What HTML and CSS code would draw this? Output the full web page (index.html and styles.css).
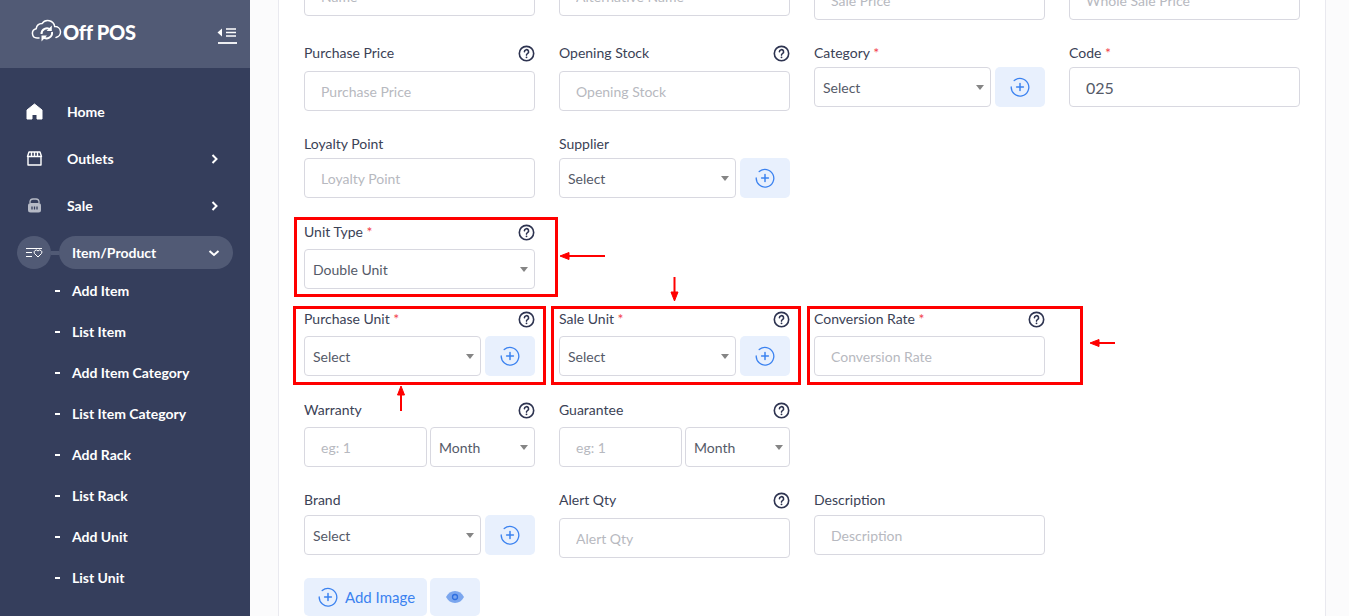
FILE: index.html
```html
<!DOCTYPE html>
<html lang="en">
<head>
  <meta charset="UTF-8">
  <meta name="viewport" content="width=device-width, initial-scale=1.0">
  <title>Off POS - Add Item</title>
  <link rel="stylesheet" href="styles.css">
</head>
<body>
  <svg width="0" height="0" class="defs">
    <symbol id="plus" viewBox="0 0 20 20">
      <path d="M4.2 3.6A8.8 8.8 0 1 1 1.2 10" fill="none" stroke="currentColor" stroke-width="1.3" stroke-linecap="round"/>
      <path d="M10 6.6v6.8M6.6 10h6.8" fill="none" stroke="currentColor" stroke-width="1.5" stroke-linecap="round"/>
    </symbol>
    <symbol id="help" viewBox="0 0 18 18">
      <circle cx="9" cy="9" r="7.6" fill="none" stroke="currentColor" stroke-width="1.7"/>
      <path d="M6.8 7.2A2.2 2.2 0 1 1 10 9.1c-.7.4-1 .8-1 1.6" fill="none" stroke="currentColor" stroke-width="1.7" stroke-linecap="round"/>
      <circle cx="9" cy="13.1" r="1" fill="currentColor"/>
    </symbol>
  </svg>

  <div class="layout">
    <aside class="sidebar">
      <div class="brand">
        <div class="logo">
          <svg width="31" height="26" viewBox="0 0 31 26">
            <path d="M8 19H6a4.7 4.7 0 0 1-.8-9.3A6 6 0 0 1 11 4.600a7 7 0 0 1 12.700 2.900 5.500 5.500 0 0 1 1.300 10.900" fill="none" stroke="#fff" stroke-width="1.500" stroke-linecap="round"/>
            <path d="M10.500 15a5.500 5.500 0 0 1 9-4.500M21 13a5.500 5.500 0 0 1-9 5" fill="none" stroke="#fff" stroke-width="2"/>
            <path d="M20.800 6.600v5.400h-5.200zM10.500 22.500v-6h5.500z" fill="#fff"/>
          </svg>
          <span class="logo-text">Off POS</span>
        </div>
        <svg class="toggle" width="20" height="18" viewBox="0 0 20 18">
          <path d="M5 1.500v8L.5 5.500z" fill="#fff"/>
          <path d="M9 2h10M9 5.500h10M9 9h10" stroke="#fff" stroke-width="1.300"/>
          <path d="M1 16h19" stroke="#fff" stroke-width="1.800"/>
        </svg>
      </div>

      <nav class="nav">
        <a class="nav-item">
          <svg class="nav-icon" width="17" height="17" viewBox="0 0 17 17"><path d="M8.500 1 16 7v9h-5v-4.500H6V16H1V7z" fill="#fff" stroke="#fff" stroke-linejoin="round"/></svg>
          <span>Home</span>
        </a>
        <a class="nav-item">
          <svg class="nav-icon" width="17" height="17" viewBox="0 0 17 17"><path d="M2 7v8h13V7M1.500 6.500 3 2h11l1.500 4.500zM5.500 2.500v4M8.500 2.500v4M11.500 2.500v4" fill="none" stroke="#fff" stroke-width="1.400" stroke-linejoin="round"/></svg>
          <span>Outlets</span>
          <svg class="chev" width="10" height="12" viewBox="0 0 10 12"><path d="m2.500 2 4 4-4 4" fill="none" stroke="#fff" stroke-width="2"/></svg>
        </a>
        <a class="nav-item">
          <svg class="nav-icon" width="17" height="17" viewBox="0 0 17 17"><path d="M4 6V4.500a3 3 0 0 1 3-2.500h3a3 3 0 0 1 3 2.500V6" fill="none" stroke="#b6bac6" stroke-width="1.300"/><rect x="2" y="6" width="13" height="9.500" rx="2.500" fill="#b6bac6"/><path d="M6 9.500v3M8.500 9.500v3M11 9.500v3" stroke="#353e5c" stroke-width="1.300"/></svg>
          <span>Sale</span>
          <svg class="chev" width="10" height="12" viewBox="0 0 10 12"><path d="m2.500 2 4 4-4 4" fill="none" stroke="#fff" stroke-width="2"/></svg>
        </a>
        <div class="nav-active">
          <span class="active-icon">
            <svg width="17" height="11" viewBox="0 0 17 11"><path d="M0 1.500h16M0 5.500h6M0 9.500h6" stroke="#fff" stroke-width="1"/><path d="M12 10 8.500 6.500a2 2 0 0 1 3.500-2.500 2 2 0 0 1 3.500 2.500z" fill="none" stroke="#fff"/></svg>
          </span>
          <span class="active-link"></span>
          <a class="active-pill">
            <span>Item/Product</span>
            <svg width="12" height="10" viewBox="0 0 12 10"><path d="m1.500 3 4.500 4 4.500-4" fill="none" stroke="#fff" stroke-width="2"/></svg>
          </a>
        </div>
        <ul class="sub-nav">
          <li>Add Item</li>
          <li>List Item</li>
          <li>Add Item Category</li>
          <li>List Item Category</li>
          <li>Add Rack</li>
          <li>List Rack</li>
          <li>Add Unit</li>
          <li>List Unit</li>
        </ul>
      </nav>
    </aside>

    <main class="main">
      <form class="card">
        <div class="row row-first">
          <div class="field short"><input type="text" placeholder="Name"></div>
          <div class="field short"><input type="text" placeholder="Alternative Name"></div>
          <div class="field"><input type="text" placeholder="Sale Price"></div>
          <div class="field"><input type="text" placeholder="Whole Sale Price"></div>
        </div>

        <div class="row">
          <div class="field">
            <div class="label help-label"><span>Purchase Price</span><svg class="help"><use href="#help"/></svg></div>
            <input type="text" placeholder="Purchase Price">
          </div>
          <div class="field">
            <div class="label help-label"><span>Opening Stock</span><svg class="help"><use href="#help"/></svg></div>
            <input type="text" placeholder="Opening Stock">
          </div>
          <div class="field">
            <div class="label"><span>Category <em>*</em></span></div>
            <div class="combo">
              <div class="select"><select><option>Select</option></select></div>
              <button type="button" class="add-btn"><svg><use href="#plus"/></svg></button>
            </div>
          </div>
          <div class="field">
            <div class="label"><span>Code <em>*</em></span></div>
            <input type="text" class="code" value="025">
          </div>
        </div>

        <div class="row row-tall-gap">
          <div class="field">
            <div class="label"><span>Loyalty Point</span></div>
            <input type="text" placeholder="Loyalty Point">
          </div>
          <div class="field">
            <div class="label"><span>Supplier</span></div>
            <div class="combo">
              <div class="select"><select><option>Select</option></select></div>
              <button type="button" class="add-btn"><svg><use href="#plus"/></svg></button>
            </div>
          </div>
        </div>

        <div class="row row-tight">
          <div class="field">
            <div class="label help-label tall"><span>Unit Type <em>*</em></span><svg class="help"><use href="#help"/></svg></div>
            <div class="select"><select><option>Double Unit</option></select></div>
          </div>
        </div>

        <div class="row row-tall-gap">
          <div class="field">
            <div class="label help-label tall"><span>Purchase Unit <em>*</em></span><svg class="help"><use href="#help"/></svg></div>
            <div class="combo">
              <div class="select"><select><option>Select</option></select></div>
              <button type="button" class="add-btn"><svg><use href="#plus"/></svg></button>
            </div>
          </div>
          <div class="field">
            <div class="label help-label tall"><span>Sale Unit <em>*</em></span><svg class="help"><use href="#help"/></svg></div>
            <div class="combo">
              <div class="select"><select><option>Select</option></select></div>
              <button type="button" class="add-btn"><svg><use href="#plus"/></svg></button>
            </div>
          </div>
          <div class="field">
            <div class="label help-label tall rate-label"><span>Conversion Rate <em>*</em></span><svg class="help"><use href="#help"/></svg></div>
            <input type="text" placeholder="Conversion Rate">
          </div>
        </div>

        <div class="row">
          <div class="field">
            <div class="label help-label tall"><span>Warranty</span><svg class="help"><use href="#help"/></svg></div>
            <div class="combo duration">
              <input type="text" placeholder="eg: 1">
              <div class="select"><select><option>Month</option></select></div>
            </div>
          </div>
          <div class="field">
            <div class="label help-label tall"><span>Guarantee</span><svg class="help"><use href="#help"/></svg></div>
            <div class="combo duration">
              <input type="text" placeholder="eg: 1">
              <div class="select"><select><option>Month</option></select></div>
            </div>
          </div>
        </div>

        <div class="row row-last">
          <div class="field">
            <div class="label low"><span>Brand</span></div>
            <div class="combo">
              <div class="select"><select><option>Select</option></select></div>
              <button type="button" class="add-btn"><svg><use href="#plus"/></svg></button>
            </div>
          </div>
          <div class="field">
            <div class="label help-label"><span>Alert Qty</span><svg class="help"><use href="#help"/></svg></div>
            <input type="text" placeholder="Alert Qty">
          </div>
          <div class="field">
            <div class="label low"><span>Description</span></div>
            <input type="text" placeholder="Description">
          </div>
        </div>

        <div class="image-actions">
          <button type="button" class="image-btn"><svg><use href="#plus"/></svg>Add Image</button>
          <button type="button" class="eye-btn">
            <svg width="18" height="12" viewBox="0 0 18 12"><path d="M0 6c2-3.800 5-6 9-6s7 2.200 9 6c-2 3.800-5 6-9 6s-7-2.200-9-6z" fill="#7ba6ee"/><circle cx="9" cy="6" r="2.500" fill="none" stroke="#2f6fe0" stroke-width="1.300"/></svg>
          </button>
        </div>
      </form>
    </main>
  </div>

  <!-- red markup drawn on top of the screenshot -->
  <div class="mark mark-type"></div>
  <div class="mark mark-purchase"></div>
  <div class="mark mark-sale"></div>
  <div class="mark mark-rate"></div>
  <svg class="arrows" width="1349" height="616" viewBox="0 0 1349 616">
    <g fill="#f00" stroke="#f00">
      <path d="M566 256h39" fill="none" stroke-width="2"/><path d="M560 256l9-3.500v7z"/>
      <path d="M1096 343h19" fill="none" stroke-width="2"/><path d="M1090 343l9-3.500v7z"/>
      <path d="M674.500 277v18" fill="none" stroke-width="2"/><path d="M674.500 301l-3.500-9h7z"/>
      <path d="M401 392v19" fill="none" stroke-width="2"/><path d="M401 386l-3.500 9h7z"/>
    </g>
  </svg>
</body>
</html>
```

FILE: styles.css
```css
* {
  box-sizing: border-box;
}
html, body {
  margin: 0;
  height: 100%;
  overflow: hidden;
}
body {
  font-family: "Lato", "Liberation Sans", sans-serif;
  color: #3b4256;
  background: #fbfbfc;
}
.defs {
  position: absolute;
}
.layout {
  display: flex;
  height: 616px;
}

/* sidebar */
.sidebar {
  width: 250px;
  flex: none;
  background: #353e5c;
  color: #fff;
}
.brand {
  height: 68px;
  background: #515a75;
  display: flex;
  align-items: center;
  justify-content: space-between;
  padding: 0 13px 0 31px;
}
.logo {
  display: flex;
  align-items: center;
  margin-bottom: 5px;
}
.logo-text {
  font-size: 20px;
  font-weight: 900;
  letter-spacing: -0.3px;
  margin-left: 1px;
}
.toggle {
  margin-top: 3px;
}
.nav {
  padding-top: 20px;
  font-size: 14px;
  font-weight: 700;
}
.nav-item {
  height: 47px;
  display: flex;
  align-items: center;
  padding-left: 26px;
}
.nav-icon {
  margin-right: 24px;
}
.chev {
  margin-left: auto;
  margin-right: 30px;
}
.nav-active {
  height: 47px;
  display: flex;
  align-items: center;
  padding-left: 17px;
}
.active-icon {
  width: 34px;
  height: 33px;
  border-radius: 50%;
  background: #515a75;
  display: flex;
  align-items: center;
  justify-content: center;
}
.active-link {
  width: 8px;
  height: 4px;
  background: #515a75;
}
.active-pill {
  width: 174px;
  height: 33px;
  border-radius: 17px;
  background: #515a75;
  display: flex;
  align-items: center;
  justify-content: space-between;
  padding: 0 13px;
}
.sub-nav {
  list-style: none;
  margin: -6px 0 0;
  padding: 0;
}
.sub-nav li {
  height: 41px;
  line-height: 41px;
  padding-left: 72px;
  position: relative;
}
.sub-nav li::before {
  content: "";
  position: absolute;
  left: 55px;
  top: 20px;
  width: 5px;
  height: 2px;
  background: #fff;
}

/* form card */
.main {
  flex: 1;
  padding: 0 23px 0 28px;
  overflow: hidden;
}
.card {
  background: #fff;
  border: 1px solid #e9e9ef;
  border-width: 0 1px;
  padding: 0 25px;
  margin-top: -20px;
}
.row {
  display: grid;
  grid-template-columns: repeat(4, 231px);
  column-gap: 24px;
  align-items: start;
  margin-bottom: 23px;
}
.row-first .short {
  margin-top: -4px;
}
.row-tall-gap {
  margin-bottom: 24px;
}
.row-tight {
  margin-bottom: 20px;
}
.row-last {
  margin-bottom: 20px;
}
.label {
  height: 20px;
  line-height: 20px;
  font-size: 14px;
  margin-bottom: 4px;
  color: #3b4256;
}
.label em {
  font-style: normal;
  color: #f2434c;
}
.label.low {
  margin-bottom: 5px;
}
.help-label {
  display: flex;
  align-items: center;
  justify-content: space-between;
  margin-bottom: 8px;
}
.help-label.tall {
  margin-bottom: 7px;
}
.help {
  width: 17px;
  height: 17px;
  color: #2d3350;
}
.rate-label .help {
  margin-right: 0;
}
input, select {
  font: inherit;
  font-size: 14px;
  width: 100%;
  height: 40px;
  background: #fff;
  border: 1px solid #d8d8e0;
  border-radius: 4px;
  color: #555a68;
  outline: none;
}
input {
  padding: 0 16px;
}
input::placeholder {
  color: #b7b9c0;
  opacity: 1;
}
input.code {
  font-size: 16px;
}
select {
  appearance: none;
  padding: 0 20px 0 8px;
}
.select {
  position: relative;
  flex: 1;
  min-width: 0;
}
.select::after {
  content: "";
  position: absolute;
  right: 7px;
  top: 18px;
  border: 4px solid transparent;
  border-top: 5px solid #858585;
  border-bottom: 0;
  pointer-events: none;
}
.combo {
  display: flex;
  gap: 4px;
}
.duration {
  gap: 3px;
}
.duration input {
  width: 123px;
  flex: none;
}
.add-btn {
  width: 50px;
  height: 40px;
  flex: none;
  border: 0;
  border-radius: 5px;
  background: #e8f0fd;
  color: #3b82f0;
  display: flex;
  align-items: center;
  justify-content: center;
  padding: 0;
}
.add-btn svg {
  width: 20px;
  height: 20px;
}
.image-actions {
  display: flex;
  gap: 3px;
}
.image-btn, .eye-btn {
  height: 38px;
  border: 0;
  border-radius: 5px;
  background: #e8f0fd;
  color: #3b82f0;
  font: inherit;
  font-size: 15px;
  display: flex;
  align-items: center;
  justify-content: center;
  padding: 0;
}
.image-btn {
  width: 123px;
  gap: 7px;
  padding-left: 2px;
}
.image-btn svg {
  width: 20px;
  height: 20px;
}
.eye-btn {
  width: 50px;
}

/* annotations */
.mark {
  position: absolute;
  border: 3px solid #f00;
}
.mark-type {
  left: 294px;
  top: 217px;
  width: 264px;
  height: 80px;
}
.mark-purchase {
  left: 293px;
  top: 306px;
  width: 253px;
  height: 79px;
}
.mark-sale {
  left: 551px;
  top: 306px;
  width: 250px;
  height: 79px;
}
.mark-rate {
  left: 807px;
  top: 306px;
  width: 276px;
  height: 79px;
}
.arrows {
  position: absolute;
  left: 0;
  top: 0;
  pointer-events: none;
}
```
